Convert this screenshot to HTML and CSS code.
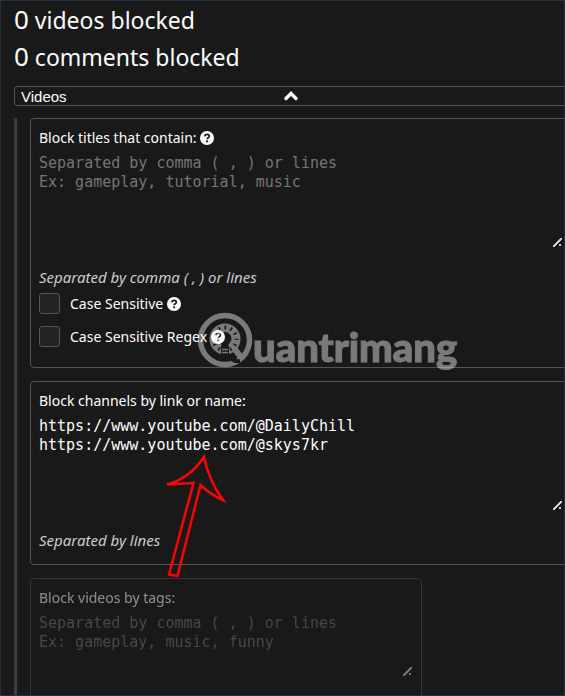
FILE: index.html
```html
<!DOCTYPE html>
<html lang="en">
<head>
    <meta charset="UTF-8">
    <meta name="viewport" content="width=device-width, initial-scale=1.0">
    <title>Video blocker</title>
    <link rel="stylesheet" href="styles.css">
</head>
<body>
    <svg class="symbols">
        <symbol id="help" viewBox="0 0 14 14">
            <circle cx="7" cy="7" r="7" fill="#fff"/>
            <path d="M4.8 5.4C5 4 5.9 3.4 7.1 3.4c1.3 0 2.2.7 2.2 1.8 0 1.6-2.2 1.5-2.2 3" fill="none" stroke="#191919" stroke-width="1.7"/>
            <circle cx="7.1" cy="10.3" r="1.1" fill="#191919"/>
        </symbol>
    </svg>

    <main class="popup">
        <div class="counter"><span class="count">0</span> videos blocked</div>
        <div class="counter"><span class="count">0</span> comments blocked</div>

        <button class="section-toggle" type="button">
            Videos
            <svg class="chevron" viewBox="0 0 14 10" aria-hidden="true">
                <path d="M2 7.5L7 2.5L12 7.5" fill="none" stroke="#fff" stroke-width="3.4" stroke-linecap="round"/>
            </svg>
        </button>

        <div class="section">
            <div class="panel">
                <div class="panel-title">
                    <label for="titles">Block titles that contain:</label>
                    <svg class="help"><use href="#help"/></svg>
                </div>
                <textarea id="titles" placeholder="Separated by comma ( , ) or lines&#10;Ex: gameplay, tutorial, music"></textarea>
                <p class="hint">Separated by comma ( , ) or lines</p>
                <div class="option">
                    <input type="checkbox" id="case">
                    <label for="case">Case Sensitive</label>
                    <svg class="help"><use href="#help"/></svg>
                </div>
                <div class="option">
                    <input type="checkbox" id="caseRegex">
                    <label for="caseRegex">Case Sensitive Regex</label>
                    <svg class="help"><use href="#help"/></svg>
                </div>
            </div>

            <div class="panel">
                <div class="panel-title">
                    <label for="channels">Block channels by link or name:</label>
                </div>
                <textarea id="channels" spellcheck="false">https://www.youtube.com/@DailyChill
https://www.youtube.com/@skys7kr</textarea>
                <p class="hint">Separated by lines</p>
            </div>

            <div class="panel disabled">
                <div class="panel-title">
                    <label for="tags">Block videos by tags:</label>
                </div>
                <textarea id="tags" class="short" placeholder="Separated by comma ( , ) or lines&#10;Ex: gameplay, music, funny"></textarea>
            </div>
        </div>

        <div class="watermark">
            <svg class="watermark-logo" viewBox="0 0 56 56" aria-hidden="true">
                <mask id="bulb">
                    <rect width="56" height="56" fill="#fff"/>
                    <circle cx="28" cy="27" r="11.500" fill="none" stroke="#000" stroke-width="4" stroke-dasharray="1.6 4.422" stroke-dashoffset="0.8"/>
                    <path d="M28 20a6.500 6.500 0 0 0-6.500 6.500c0 4 3.500 5 3.500 9h6c0-4 3.500-5 3.500-9A6.500 6.500 0 0 0 28 20Z" fill="#000"/>
                    <path d="M24 34h8v10h-8Z" fill="#000"/>
                    <path d="M25 37.500h6M25 40.500h6" stroke="#fff" stroke-width="1.500"/>
                    <path d="M35 46q2 4 8 3" fill="none" stroke="#000" stroke-width="4"/>
                </mask>
                <g mask="url(#bulb)">
                    <circle cx="28" cy="28" r="24.500" fill="none" stroke="#fff" stroke-width="5.500"/>
                    <circle cx="28" cy="27" r="15.500" fill="#fff"/>
                    <path d="M37 36l6 8" stroke="#fff" stroke-width="6" stroke-linecap="round"/>
                </g>
            </svg>
            <span class="watermark-name">uantrimang</span>
        </div>

        <svg class="arrow" viewBox="0 0 64 124" aria-hidden="true">
            <path d="M41 4Q26 26 4 31.500L30.500 30L6 121.500L14.500 123L37.500 32Q48 42 60 47Q46 28 41 4Z" fill="none" stroke="#f00" stroke-width="2.500"/>
        </svg>
    </main>
</body>
</html>
```

FILE: styles.css
```css
* {
    margin: 0;
    padding: 0;
    box-sizing: border-box;
}

body {
    background: #191919;
    color: #fff;
    color-scheme: dark;
    font-family: 'Noto Sans', 'Open Sans', sans-serif;
    font-size: 14px;
    line-height: 20px;
}

.symbols {
    display: none;
}

.popup {
    position: relative;
    height: 100vh;
    overflow: hidden;
    padding-left: 13px;
    border: 1px solid #24323d;
}

.counter {
    height: 37px;
    font-size: 23px;
    line-height: 37px;
}

.count {
    font-size: 26px;
}

.section-toggle {
    display: flex;
    align-items: center;
    position: relative;
    width: calc(100% + 4px);
    height: 20px;
    margin-top: 11px;
    padding: 0 6px;
    background: none;
    border: 1px solid #555;
    border-radius: 3px;
    color: #fff;
    font: 15px 'Liberation Sans', Arial, sans-serif;
}

.chevron {
    position: absolute;
    left: 50%;
    width: 14px;
    height: 10px;
    transform: translateX(-50%);
}

.section {
    display: flex;
    flex-direction: column;
    gap: 13px;
    margin: 12px -8px 0 0;
    padding-left: 13px;
    border-left: 3px solid #3d3d3d;
}

.panel {
    padding: 9px 8px 14px;
    border: 1px solid #555;
    border-radius: 4px;
}

.panel.disabled {
    width: 392px;
    opacity: 0.5;
}

.panel-title {
    display: flex;
    align-items: center;
    gap: 3px;
    margin-bottom: 4px;
}

.help {
    width: 14px;
    height: 14px;
}

textarea {
    display: block;
    width: 100%;
    height: 96px;
    padding: 2px 0;
    background: transparent;
    border: none;
    outline: none;
    color: #fff;
    font: 15px/19px 'DejaVu Sans Mono', monospace;
    resize: both;
}

textarea.short {
    height: 65px;
}

textarea::placeholder {
    color: #757575;
}

/* diagonal grip with a short second stroke */
textarea::-webkit-resizer {
    background:
        linear-gradient(135deg, transparent 42%, #ccc 42%, #ccc 58%, transparent 58%) 5px 5px / 9px 9px no-repeat,
        linear-gradient(#ccc, #ccc) 11px 11px / 2px 2px no-repeat;
}

.hint {
    margin-top: 19px;
    color: #ccc;
    font-size: 15px;
    font-style: italic;
}

.panel.disabled textarea {
    margin-bottom: 20px;
}

.option {
    display: flex;
    align-items: center;
    gap: 4px;
    height: 33px;
}

.option input {
    appearance: none;
    width: 21px;
    height: 21px;
    margin-right: 6px;
    background: #222;
    border: 1px solid #555;
    border-radius: 3px;
}

/* overlays */
.watermark {
    position: absolute;
    top: 311px;
    left: 196px;
    display: flex;
    align-items: flex-start;
    opacity: 0.42;
    font: 900 40px/56px Lato, sans-serif;
    pointer-events: none;
}

.watermark-logo {
    width: 56px;
    height: 56px;
}

.watermark-name {
    padding-top: 7px;
    -webkit-text-stroke: 1px #fff;
}

.arrow {
    position: absolute;
    top: 452px;
    left: 162px;
    width: 64px;
    height: 124px;
    pointer-events: none;
}
```
